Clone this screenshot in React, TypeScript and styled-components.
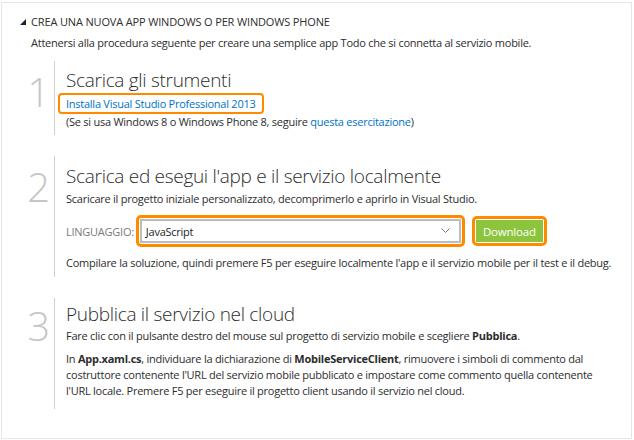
import React from "react";
import styled, { createGlobalStyle } from "styled-components";

const GlobalStyle = createGlobalStyle`
  body {
    margin: 0;
    background: #ffffff;
    font-family: "Open Sans", "Noto Sans", "Liberation Sans", sans-serif;
    color: #2d2d2d;
  }
`;

const Frame = styled.div`
  box-sizing: border-box;
  margin: 2px 0 0 1px;
  width: 631px;
  height: 437px;
  border: 1px solid #e6e6e6;
  padding: 11px 16px 0 18px;
`;

const Header = styled.div`
  display: flex;
  align-items: center;
  gap: 5px;
  font-size: 11px;
  line-height: 16px;
  letter-spacing: -0.15px;
  text-transform: uppercase;
  color: #2d2d2d;
`;

const Intro = styled.p`
  margin: 5px 0 0 11px;
  font-size: 11px;
  line-height: 16px;
  letter-spacing: -0.25px;
`;

const Steps = styled.div`
  display: flex;
  flex-direction: column;
  gap: 21px;
  margin-top: 10px;
`;

const Step = styled.section`
  display: flex;
`;

const Number = styled.div<{ $top: number }>`
  box-sizing: border-box;
  flex: 0 0 34px;
  padding-right: 4px;
  padding-top: ${(p) => p.$top}px;
  text-align: right;
  font-size: 40px;
  line-height: 40px;
  font-weight: 300;
  color: #c6c6c6;
`;

const Content = styled.div<{ $top: number; $bottom: number }>`
  flex: 1;
  min-width: 0;
  border-left: 1px solid #cfcfcf;
  padding: ${(p) => p.$top}px 0 ${(p) => p.$bottom}px 11px;
`;

const Title = styled.h2`
  margin: 0;
  font-size: 19px;
  line-height: 22px;
  font-weight: 300;
  letter-spacing: -0.3px;
  color: #2d2d2d;
`;

const Text = styled.p<{ $mt?: number }>`
  margin: ${(p) => p.$mt ?? 0}px 0 0;
  font-size: 11px;
  line-height: 16px;
  letter-spacing: -0.25px;
  white-space: nowrap;
`;

const Link = styled.a`
  color: #0072c6;
  text-decoration: none;
`;

const Highlight = styled.div`
  display: inline-block;
  margin: 0 0 0 -8px;
  padding: 1px 6px;
  border: 2px solid #ff8a00;
  border-radius: 4px;
  font-size: 11px;
  line-height: 15px;
  letter-spacing: -0.25px;
`;

const Row = styled.div`
  display: flex;
  align-items: center;
  margin-top: 8px;
  height: 32px;
`;

const Label = styled.span`
  font-size: 11px;
  color: #7a7a7a;
  letter-spacing: -0.25px;
  margin-right: 2px;
`;

const Outline = styled.div`
  box-sizing: border-box;
  padding: 1px;
  border: 3px solid #ff8a00;
  border-radius: 5px;
  display: flex;
`;

const Select = styled.div`
  box-sizing: border-box;
  width: 321px;
  height: 24px;
  border: 2px solid #bdbdbd;
  display: flex;
  align-items: center;
  justify-content: space-between;
  padding: 0 9px 0 4px;
  font-size: 11px;
  letter-spacing: -0.25px;
  color: #1e1e1e;
`;

const Chevron = styled.svg`
  width: 9px;
  height: 6px;
`;

const DownloadOutline = styled(Outline)`
  margin-left: 7px;
`;

const Button = styled.button`
  width: 67px;
  height: 22px;
  border: 0;
  padding: 0;
  background: #8cc43e;
  color: #ffffff;
  font-family: inherit;
  font-size: 11.5px;
  letter-spacing: -0.2px;
`;

const Triangle = () => (
  <svg width="6" height="6" viewBox="0 0 6 6">
    <polygon points="6,0 6,6 0,6" fill="#222" />
  </svg>
);

export default function App() {
  return (
    <>
      <GlobalStyle />
      <Frame>
        <Header>
          <Triangle />
          Crea una nuova app Windows o per Windows Phone
        </Header>
        <Intro>
          Attenersi alla procedura seguente per creare una semplice app Todo che si connetta al servizio mobile.
        </Intro>
        <Steps>
          <Step>
            <Number $top={11}>1</Number>
            <Content $top={8} $bottom={5}>
              <Title>Scarica gli strumenti</Title>
              <Highlight>
                <Link href="#">Installa Visual Studio Professional 2013</Link>
              </Highlight>
              <Text>
                (Se si usa Windows 8 o Windows Phone 8, seguire <Link href="#">questa esercitazione</Link>)
              </Text>
            </Content>
          </Step>
          <Step>
            <Number $top={11}>2</Number>
            <Content $top={9} $bottom={6}>
              <Title>Scarica ed esegui l'app e il servizio localmente</Title>
              <Text $mt={4}>
                Scaricare il progetto iniziale personalizzato, decomprimerlo e aprirlo in Visual Studio.
              </Text>
              <Row>
                <Label>LINGUAGGIO:</Label>
                <Outline>
                  <Select>
                    JavaScript
                    <Chevron viewBox="0 0 9 6">
                      <polyline points="0.5,0.5 4.5,4.5 8.5,0.5" fill="none" stroke="#777" strokeWidth="1" />
                    </Chevron>
                  </Select>
                </Outline>
                <DownloadOutline>
                  <Button>Download</Button>
                </DownloadOutline>
              </Row>
              <Text $mt={8}>
                Compilare la soluzione, quindi premere F5 per eseguire localmente l'app e il servizio mobile per il test e il debug.
              </Text>
            </Content>
          </Step>
          <Step>
            <Number $top={8}>3</Number>
            <Content $top={5} $bottom={10}>
              <Title>Pubblica il servizio nel cloud</Title>
              <Text $mt={3}>
                Fare clic con il pulsante destro del mouse sul progetto di servizio mobile e scegliere <b>Pubblica</b>.
              </Text>
              <Text $mt={7}>
                In <b>App.xaml.cs</b>, individuare la dichiarazione di <b>MobileServiceClient</b>, rimuovere i simboli di commento dal
                <br />
                costruttore contenente l'URL del servizio mobile pubblicato e impostare come commento quella contenente
                <br />
                l'URL locale. Premere F5 per eseguire il progetto client usando il servizio nel cloud.
              </Text>
            </Content>
          </Step>
        </Steps>
      </Frame>
    </>
  );
}
